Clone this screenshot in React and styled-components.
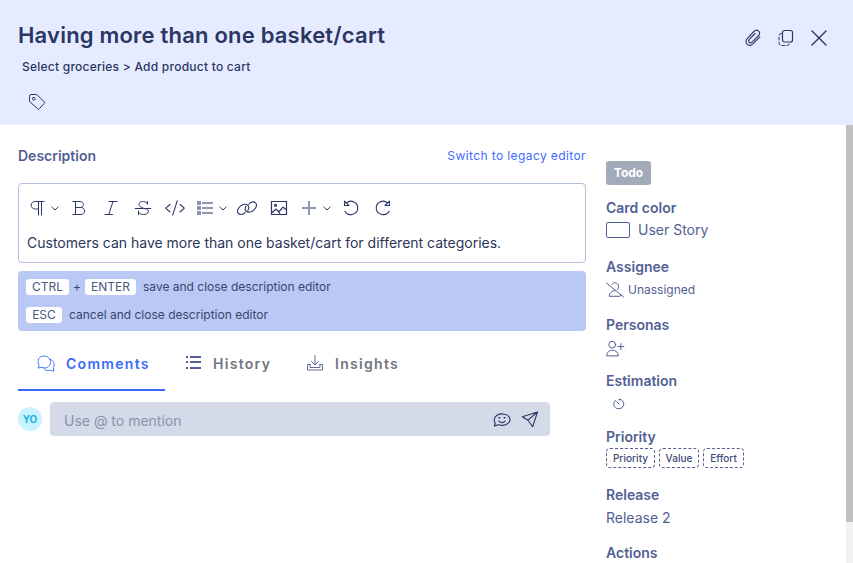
import React from "react";
import styled, { createGlobalStyle } from "styled-components";

const Global = createGlobalStyle`
  * { box-sizing: border-box; }
  body { margin: 0; background: #fff; overflow: hidden; font-family: Inter, "Liberation Sans", sans-serif; }
`;

const navy = "#2a3663";
const slate = "#535f94";
const blue = "#3a69fc";

const Page = styled.div`
  width: 853px;
  height: 563px;
  overflow: hidden;
  display: flex;
  flex-direction: column;
  color: ${navy};
`;

const Header = styled.header`
  height: 125px;
  flex: none;
  background: #e6ebff;
  padding: 19px 24px 0 18px;
  display: flex;
  justify-content: space-between;
`;

const Heading = styled.div`
  display: flex;
  flex-direction: column;
  align-items: flex-start;
`;

const Title = styled.h1`
  margin: 0;
  font-size: 22px;
  line-height: 32px;
  font-weight: 600;
  letter-spacing: 0.2px;
  white-space: nowrap;
`;

const Breadcrumb = styled.div`
  margin: 6px 0 0 4px;
  font-size: 12px;
  line-height: 20px;
  font-weight: 500;
  letter-spacing: 0.24px;
  white-space: nowrap;
`;

const TagButton = styled.div`
  margin: 15px 0 0 10px;
  display: flex;
`;

const HeaderActions = styled.div`
  display: flex;
  gap: 13px;
  height: 38px;
  align-items: center;
`;

const Svg = styled.svg`
  display: block;
  flex: none;
  fill: none;
  stroke: currentColor;
  stroke-width: ${(p) => p.$weight || 1};
  stroke-linecap: round;
  stroke-linejoin: round;
`;

const Body = styled.div`
  flex: 1;
  min-height: 0;
  display: flex;
  padding-left: 18px;
`;

const Main = styled.main`
  width: 568px;
  flex: none;
`;

const DescriptionBar = styled.div`
  height: 58px;
  padding-top: 21px;
  display: flex;
  justify-content: space-between;
  line-height: 20px;
`;

const Label = styled.h2`
  margin: 0;
  font-size: 14px;
  line-height: 20px;
  font-weight: 600;
  letter-spacing: 0;
  color: ${slate};
`;

const LegacyLink = styled.a`
  font-size: 12px;
  letter-spacing: 0.4px;
  color: #4169ff;
  white-space: nowrap;
`;

const Editor = styled.section`
  height: 80px;
  border: 1px solid #b4bfe0;
  border-radius: 4px;
`;

const Toolbar = styled.div`
  display: flex;
  align-items: center;
  height: 48px;
  padding-left: 4px;
`;

const Tool = styled.div`
  width: ${(p) => (p.$menu ? 40 : 32)}px;
  padding-left: ${(p) => (p.$menu ? 4 : 6)}px;
  display: flex;
  align-items: center;
  gap: 2px;
  color: ${navy};
`;

const EditorText = styled.p`
  margin: 0;
  padding-left: 8px;
  font-size: 14px;
  line-height: 22px;
  color: #2b3658;
  white-space: nowrap;
`;

const Hints = styled.div`
  margin-top: 8px;
  height: 60px;
  border-radius: 4px;
  background: #bac8f6;
  padding: 8px 8px;
  display: flex;
  flex-direction: column;
  gap: 12px;
`;

const Hint = styled.div`
  display: flex;
  align-items: center;
  height: 16px;
  font-size: 12px;
  line-height: 16px;
  color: #39466c;
  white-space: nowrap;
`;

const Key = styled.kbd`
  font-family: inherit;
  width: ${(p) => p.$width}px;
  text-align: center;
  background: #fff;
  border-radius: 3px;
  color: #4b5782;
`;

const Plus = styled.span`
  width: 16px;
  text-align: center;
`;

const HintText = styled.span`
  margin-left: 7px;
`;

const Tabs = styled.nav`
  display: flex;
  height: 60px;
`;

const Tab = styled.div`
  width: ${(p) => p.$width}px;
  height: 60px;
  padding: 6px 0 0 ${(p) => p.$inset}px;
  border-bottom: 2px solid ${(p) => (p.$active ? blue : "transparent")};
  color: ${(p) => (p.$active ? blue : slate)};
  display: flex;
  align-items: center;
  gap: ${(p) => p.$gap || 11}px;
  span {
    font-size: 14px;
    font-weight: 600;
    letter-spacing: 1.3px;
    color: ${(p) => (p.$active ? blue : "#72757c")};
  }
`;

const CommentRow = styled.div`
  display: flex;
  align-items: center;
  gap: 8px;
  margin-top: 11px;
`;

const Avatar = styled.div`
  width: 24px;
  height: 24px;
  border-radius: 50%;
  background: #cbf2ff;
  color: #18b3e3;
  font-size: 10px;
  font-weight: 700;
  line-height: 25px;
  text-align: center;
`;

const CommentBox = styled.div`
  width: 500px;
  height: 34px;
  border-radius: 4px;
  background: #d5dae8;
  padding: 3px 11px 0 14px;
  display: flex;
  align-items: center;
  font-size: 14px;
  color: #8b91b0;
`;

const CommentTools = styled.div`
  margin: -3px 0 0 auto;
  display: flex;
  gap: 10px;
  color: ${navy};
`;

const Sidebar = styled.aside`
  margin-left: 20px;
  flex: 1;
  padding-top: 36px;
  color: ${slate};
`;

const Status = styled.div`
  width: 45px;
  height: 24px;
  border-radius: 3px;
  background: #a2abba;
  color: #fff;
  font-size: 12px;
  font-weight: 700;
  line-height: 24px;
  text-align: center;
`;

const Field = styled.section`
  height: ${(p) => p.$height}px;
`;

const Value = styled.div`
  display: flex;
  align-items: center;
  gap: ${(p) => p.$gap || 0}px;
  height: ${(p) => p.$height || 24}px;
  font-size: ${(p) => p.$size || 14}px;
  padding-left: ${(p) => p.$inset || 0}px;
`;

const ValueText = styled.span`
  padding-bottom: 2px;
`;

const Swatch = styled.span`
  width: 24px;
  height: 16px;
  border: 1px solid ${slate};
  border-radius: 2px;
`;

const Chips = styled.div`
  display: flex;
  gap: 4px;
  margin-top: 1px;
`;

const ChipFrame = styled.div`
  width: ${(p) => p.$width}px;
  height: 20px;
  border: 1px dashed ${slate};
  border-radius: 4px;
  font-size: 10px;
  font-weight: 500;
  line-height: 19px;
  letter-spacing: 0.05px;
  text-align: center;
  color: #3e4a78;
`;

const Track = styled.div`
  width: 7px;
  background: #f1f1f1;
`;

const Thumb = styled.div`
  height: 397px;
  background: #c1c1c1;
`;

function Icon({ w = 20, h = 20, weight, children }) {
  return (
    <Svg width={w} height={h} viewBox={`0 0 ${w} ${h}`} $weight={weight}>
      {children}
    </Svg>
  );
}

const Chevron = () => (
  <Icon w={12}><path d="M2.8 9 6 12 9.2 9" /></Icon>
);

export default function App() {
  return (
    <>
      <Global />
      <Page>
        <Header>
          <Heading>
            <Title>Having more than one basket/cart</Title>
            <Breadcrumb>Select groceries &gt; Add product to cart</Breadcrumb>
            <TagButton>
              <Icon w={18}>
                <path d="M1.5 4Q1.5 2.5 3 2.5H8q.8 0 1.4.6l6.7 6.7q.9.9 0 1.8l-4.7 5.1q-.9 1-1.8 0L2.1 10q-.6-.6-.6-1.4Z" />
                <rect x="4.5" y="5.5" width="2.5" height="2.5" rx=".8" />
              </Icon>
            </TagButton>
          </Heading>
          <HeaderActions>
            <Icon weight={1.1}>
              <path d="m17.7 9.6-6.8 6.8c-4.4 4.4-10-.9-5.5-5.5l6.3-6.6c3.3-3.3 7.8.8 4.7 4l-6.3 6.4c-2.3 2.3-5-.4-2.8-2.7l5.6-5.7" transform="translate(-.8 -.8)" />
            </Icon>
            <Icon>
              <rect x="6.5" y="2.5" width="10" height="11.5" rx="2" strokeWidth="1.2" />
              <path d="M5.5 5.5q-2.5 0-2.5 2.5v6.5q0 3 3 3h5q2 0 2.5-2" strokeDasharray="3 2" />
            </Icon>
            <Icon weight={1.4}><path d="m3 3 14 14M17 3 3 17" /></Icon>
          </HeaderActions>
        </Header>
        <Body>
          <Main>
            <DescriptionBar>
              <Label>Description</Label>
              <LegacyLink>Switch to legacy editor</LegacyLink>
            </DescriptionBar>
            <Editor>
              <Toolbar>
                <Tool $menu>
                  <Icon>
                    <path d="M17 3.5H8.5C2.7 3.5 2.7 11 8.5 11H11.5M11.5 3.5V17M14.5 3.5V17" />
                  </Icon>
                  <Chevron />
                </Tool>
                <Tool>
                  <Icon>
                    <path d="M4 3.5h7.2c4.3 0 4.3 6 0 6H6.5h5.3c5 0 5 7 0 7H4M6.5 3.5v13" />
                  </Icon>
                </Tool>
                <Tool>
                  <Icon><path d="M8 3.5h8M4 16.5h7.5M12 3.5 7.8 16.5" /></Icon>
                </Tool>
                <Tool>
                  <Icon>
                    <path d="M14.5 6V3.5M14.5 6c-.8-3.3-8.5-3.6-8.5.2 0 2 1.8 3 4.2 3.8M2.2 10.5h15.6M12 10.5c5.6 1.2 4 6-1.5 6-3 0-4.8-1-5-3M5.5 13.2v3.3" />
                  </Icon>
                </Tool>
                <Tool>
                  <Icon weight={1.1}><path d="M5 6.5 .7 10.2 5 14M15 6.5l4.3 3.7L15 14M12.3 2.7 7.7 17.2" /></Icon>
                </Tool>
                <Tool $menu>
                  <Icon>
                    <path d="M2 3h4v4H2ZM2 8h4v4H2ZM2 13h4v4H2ZM7 4h11v2H7ZM7 9h11v2H7ZM7 14h11v2H7Z" fill="#8c97b0" stroke="none" />
                  </Icon>
                  <Chevron />
                </Tool>
                <Tool>
                  <Icon weight={1.1}>
                    <path d="M8.2 14.2C6.6 16.8 2.9 17.3 1.2 15.2-.8 12.5 2.2 8.2 6 6.6c3.8-1.3 7.6 1.6 4.9 5.6M11.8 6.2c1.6-2.6 5.3-3.1 7-1 2 2.7-1 7-4.8 8.6-3.8 1.3-7.6-1.6-4.9-5.6" />
                  </Icon>
                </Tool>
                <Tool>
                  <Icon weight={1.2}>
                    <path d="M2.5 3.5h15v13h-15ZM2.5 15 7 11l2.8 3 4.2-5 3.5 3M9.5 14l2 2.5" strokeLinejoin="miter" />
                    <circle cx="6.5" cy="7.3" r="1" />
                  </Icon>
                </Tool>
                <Tool $menu>
                  <Icon><path d="M10 3v14M3 10h14" stroke="#8c97b0" strokeWidth="2" strokeLinecap="butt" /></Icon>
                  <Chevron />
                </Tool>
                <Tool>
                  <Icon weight={1.1}><path d="M3.5 3.2v4.3H8ZM5.2 5.2C10 .8 17.2 4.5 16.7 10.5c-.4 6.5-10 8.4-12.8 2.8" /></Icon>
                </Tool>
                <Tool>
                  <Icon weight={1.1}><path d="M16.5 3.2v4.3H12ZM14.8 5.2C10 .8 2.8 4.5 3.3 10.5c.4 6.5 10 8.4 12.8 2.8" /></Icon>
                </Tool>
              </Toolbar>
              <EditorText>Customers can have more than one basket/cart for different categories.</EditorText>
            </Editor>
            <Hints>
              <Hint>
                <Key $width={43}>CTRL</Key><Plus>+</Plus><Key $width={51}>ENTER</Key>
                <HintText>save and close description editor</HintText>
              </Hint>
              <Hint>
                <Key $width={36}>ESC</Key>
                <HintText>cancel and close description editor</HintText>
              </Hint>
            </Hints>
            <Tabs>
              <Tab $active $width={147} $inset={19}>
                <Icon w={18} weight={0.9}>
                  <path d="M2 12.5C-.5 7.5 2 3 7 3s8.5 5.5 5.5 9.5c-2 2.7-5 2.8-7.5 1.8L1.4 15ZM12.8 6.3c4.2.7 5.3 5 3.6 8.2l.6 3.7-3.8-1c-3 1.2-5.4 0-6.4-1.8" />
                </Icon>
                <span>Comments</span>
              </Tab>
              <Tab $width={123} $inset={20} $gap={10}>
                <Icon w={18} weight={2}><path d="M6 4h9M6 9h9M6 15h9M2 4h.1M2 9h.1M2 15h.1" strokeLinecap="square" /></Icon>
                <span>History</span>
              </Tab>
              <Tab $width={130} $inset={18}>
                <Icon w={18} weight={0.9}>
                  <path d="M9 2.5v9M5.5 8.5 9 12l3.5-3.5M4.3 11.5H1.5V17h15v-5.5h-2.8M4 11.5v3h10v-3" />
                </Icon>
                <span>Insights</span>
              </Tab>
            </Tabs>
            <CommentRow>
              <Avatar>YO</Avatar>
              <CommentBox>
                Use @ to mention
                <CommentTools>
                  <Icon w={18} weight={1.1}>
                    <path d="M2.3 14.2C.3 11.6 1.2 8 4 6.2c3.4-2.1 9.6-1.8 12 1.5 3.4 5.2-2.4 9.3-8 8.6l-2.5-.6-4.2 1.2ZM5.8 12.2q3.2 2.8 6.4 0" />
                    <path d="M6 8.8h.7M11.2 8.8h.7" strokeWidth="1.5" />
                  </Icon>
                  <Icon w={18} weight={1.1}><path d="M16.5 3 1.3 7.7 7 11.2l4.7 6.5ZM16.5 3 7 11.2" /></Icon>
                </CommentTools>
              </CommentBox>
            </CommentRow>
          </Main>
          <Sidebar>
            <Field $height={37}><Status>Todo</Status></Field>
            <Field $height={59}>
              <Label>Card color</Label>
              <Value $gap={8}><Swatch /><ValueText>User Story</ValueText></Value>
            </Field>
            <Field $height={58}>
              <Label>Assignee</Label>
              <Value $gap={4} $size={12} $height={26}>
                <Icon w={18} weight={1}>
                  <path d="m.5 3 17 14M6 4.5C8-.2 15.5 4.5 11.5 9.5M9.3 10.7c-4 .1-6 2.3-6 5.6h10.5c.5 0 .9-.3.8-.8" />
                </Icon>
                <ValueText>Unassigned</ValueText>
              </Value>
            </Field>
            <Field $height={56}>
              <Label>Personas</Label>
              <Value $height={27}>
                <Icon w={19}>
                  <circle cx="6.2" cy="5.7" r="3.4" />
                  <path d="M.6 16.5c0-7.2 11.7-7.2 11.7 0ZM14.9 4.6v6M11.9 7.6h6" />
                </Icon>
              </Value>
            </Field>
            <Field $height={56}>
              <Label>Estimation</Label>
              <Value $height={26} $inset={7}>
                <Icon w={12} h={12}><path d="M6.2 1.2c6.2.2 6.2 9.3-.4 9.6C-.2 10.5-.2 5 2.4 2.5M6.2 1.2v1M3.7 3.8 6 6" /></Icon>
              </Value>
            </Field>
            <Field $height={58}>
              <Label>Priority</Label>
              <Chips>
                <ChipFrame $width={49}>Priority</ChipFrame>
                <ChipFrame $width={40}>Value</ChipFrame>
                <ChipFrame $width={41}>Effort</ChipFrame>
              </Chips>
            </Field>
            <Field $height={58}>
              <Label>Release</Label>
              <Value $height={26}><ValueText>Release 2</ValueText></Value>
            </Field>
            <Label>Actions</Label>
          </Sidebar>
          <Track><Thumb /></Track>
        </Body>
      </Page>
    </>
  );
}
